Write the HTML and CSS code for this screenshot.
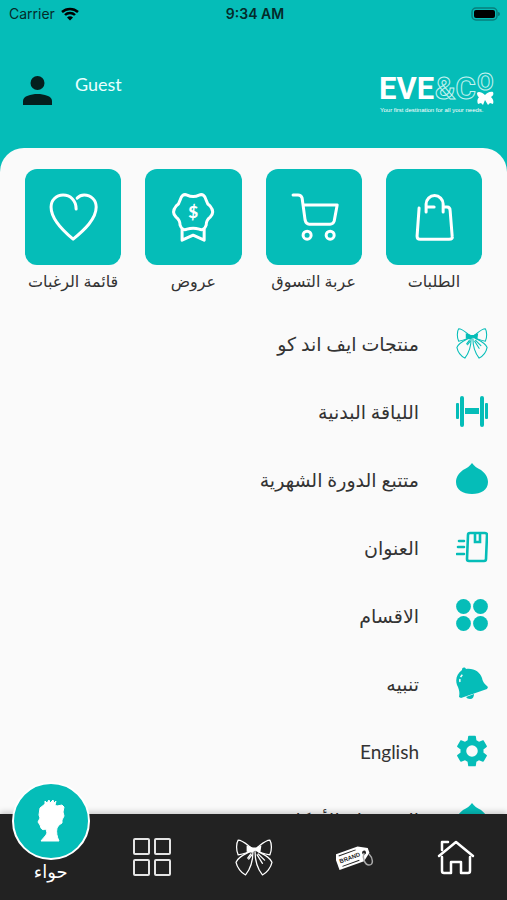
FILE: index.html
```html
<!DOCTYPE html>
<html lang="ar" dir="rtl">
<head>
    <meta charset="UTF-8">
    <meta name="viewport" content="width=device-width, initial-scale=1.0">
    <title>EVE&amp;CO</title>
    <link rel="stylesheet" href="styles.css">
</head>
<body>

<!-- shared shapes -->
<svg class="symbols" width="0" height="0" aria-hidden="true">
    <symbol id="bow" viewBox="0 0 36 36">
        <g fill="none" stroke="currentColor" stroke-width="1.2" stroke-linejoin="round" stroke-linecap="round">
            <path d="M15 9C11 6 7 2 3 2C1 5 1 12 3 16C8 15 12 14 15 12M21 9C25 6 29 2 33 2C35 5 35 12 33 16C28 15 24 14 21 12"/>
            <path d="M14 13C8 16 3 18 1 23C2 28 6 33 10 35C14 30 17 23 17 13M22 13C28 16 33 18 35 23C34 28 30 33 26 35C22 30 19 23 19 13"/>
            <path d="M15 15L12 19M13 20L16 16M21 16L26 24M22 15L28 21"/>
        </g>
        <path d="M11 7L17 9H20L25 7L24 14L19 12L16 14L11 13Z" fill="currentColor"/>
    </symbol>
    <symbol id="drop" viewBox="0 0 32 32">
        <path d="M16 0C18 3 21 5 25 7C29 10 32 14 32 19C32 27 25 31 16 31S0 27 0 19C0 14 3 10 7 7C11 5 14 3 16 0Z" fill="currentColor"/>
    </symbol>
</svg>

<div class="status-bar" dir="ltr">
    <div class="carrier">
        <span>Carrier</span>
        <svg width="18" height="14" viewBox="0 0 18 14">
            <path d="M1 5A12 12 0 0 1 17 5M4 8A7 7 0 0 1 14 8" fill="none" stroke="currentColor" stroke-width="2.5"/>
            <path d="M9 13.5L6 10.6A4 4 0 0 1 12 10.6Z" fill="currentColor"/>
        </svg>
    </div>
    <time class="clock">9:34 AM</time>
    <svg class="battery" width="30" height="14" viewBox="0 0 30 14">
        <rect x="1" y="1" width="25" height="12" rx="4" fill="none" stroke="#087f7c" stroke-width="1.5"/>
        <rect x="3" y="3" width="21" height="8" rx="2" fill="#000"/>
        <path d="M27 5Q29 5 29 7T27 9Z" fill="#087f7c"/>
    </svg>
</div>

<header class="header" dir="ltr">
    <a class="user" href="#">
        <svg width="29" height="29" viewBox="0 0 29 29">
            <circle cx="14.5" cy="7" r="7" fill="#041f1e"/>
            <path d="M0 29V25C0 20 8 18 14.5 18S29 20 29 25V29Z" fill="#041f1e"/>
        </svg>
        <span>Guest</span>
    </a>
    <svg class="logo" width="116" height="44" viewBox="0 0 116 44" role="img" aria-label="EVE&amp;CO">
        <text class="logo-solid" x="0" y="30">EVE</text>
        <text class="logo-outline" x="56" y="30">&amp;C</text>
        <text class="logo-small" x="98" y="21">O</text>
        <path d="M106 26C103 23 99 22 98 24C98 26 99 28 100 28C98 30 98 33 99 35L102 34L104 36L106 31L109 36L111 34L114 35C115 32 114 30 112 28C114 27 115 25 114 23C111 22 108 24 106 26Z" fill="#fff"/>
        <text class="logo-tagline" x="1" y="43">Your first destination for all your needs.</text>
    </svg>
</header>

<main class="panel">
    <nav class="tiles">
        <a class="tile" href="#">
            <span class="tile-box">
                <svg viewBox="0 0 96 96">
                    <path d="M33 39L31 67Q31 70 34 70H63Q67 70 66 67L64 42Q64 38 61 38H57M40 43V35A8.500 8.500 0 0 1 57 35V43M41 38H48"/>
                </svg>
            </span>
            <span>الطلبات</span>
        </a>
        <a class="tile" href="#">
            <span class="tile-box">
                <svg viewBox="0 0 96 96">
                    <path d="M27 26H32Q35 26 36 29L39 51Q40 55 43 55H64Q67 55 68 52L71 36H38"/>
                    <circle cx="41" cy="66" r="4"/>
                    <circle cx="64" cy="66" r="4"/>
                </svg>
            </span>
            <span>عربة التسوق</span>
        </a>
        <a class="tile" href="#">
            <span class="tile-box">
                <svg viewBox="0 0 96 96">
                    <path d="M42 26Q48 29 54 26Q59 24 61 31Q62 35 65 37Q70 43 65 48Q61 51 61 56Q59 62 54 60Q48 58 42 60Q37 62 35 56Q35 51 31 48Q26 43 31 37Q34 35 35 31Q37 24 42 26Z"/>
                    <path d="M37 60V71L48 66L59 71V60"/>
                    <text class="tile-dollar" x="48" y="49">$</text>
                </svg>
            </span>
            <span>عروض</span>
        </a>
        <a class="tile" href="#">
            <span class="tile-box">
                <svg viewBox="0 0 96 96">
                    <path d="M51 40C51 31 45 26 38 26C31 26 26 31 26 38C26 50 37 61 48 70C59 61 71 50 71 38C71 31 66 26 59 26Q55 26 52 29"/>
                </svg>
            </span>
            <span>قائمة الرغبات</span>
        </a>
    </nav>

    <ul class="menu">
        <li><a href="#">
            <svg viewBox="0 0 36 36"><use href="#bow"/></svg>
            <span>منتجات ايف اند كو</span>
        </a></li>
        <li><a href="#">
            <svg viewBox="0 0 32 32" fill="currentColor">
                <rect x="0" y="8" width="3" height="16" rx="1"/>
                <rect x="4" y="1" width="4" height="31" rx="2"/>
                <rect x="9" y="13" width="14" height="6"/>
                <rect x="24" y="1" width="4" height="31" rx="2"/>
                <rect x="29" y="8" width="3" height="16" rx="1"/>
            </svg>
            <span>اللياقة البدنية</span>
        </a></li>
        <li><a href="#">
            <svg viewBox="0 0 32 32"><use href="#drop"/></svg>
            <span>متتبع الدورة الشهرية</span>
        </a></li>
        <li><a href="#">
            <svg viewBox="0 0 32 32" fill="none" stroke="currentColor" stroke-width="2.600">
                <path d="M14 2H29Q31 2 31 4L30 28Q30 30 28 30H13Q11 30 11 28L12 4Q12 2 14 2ZM19 2V11H24V2"/>
                <path d="M3 10H8M2 16H8M1 23H8" stroke-linecap="round"/>
            </svg>
            <span>العنوان</span>
        </a></li>
        <li><a href="#">
            <svg viewBox="0 0 32 32" fill="currentColor">
                <circle cx="7.500" cy="7.500" r="7.400"/>
                <circle cx="24.500" cy="7.500" r="7.400"/>
                <circle cx="7.500" cy="24.500" r="7.400"/>
                <circle cx="24.500" cy="24.500" r="7.400"/>
            </svg>
            <span>الاقسام</span>
        </a></li>
        <li><a href="#">
            <svg viewBox="0 0 32 32" fill="currentColor">
                <path d="M6 3C6 0 9 0 10 2C18 1 24 5 26 11C27 16 29 17 32 20L31 22L5 31L3 30C4 25 3 22 1 18C-1 12 1 7 6 3Z"/>
                <path d="M10 30L18 27Q18 32 14 32Q11 32 10 30Z"/>
                <path d="M4 15Q3 11 7 7" fill="none" stroke="#fafafa" stroke-width="1.500" stroke-dasharray="3 2"/>
            </svg>
            <span>تنبيه</span>
        </a></li>
        <li><a href="#">
            <svg viewBox="2 2 20 20" fill="currentColor">
                <path d="M19.140 12.940c.04-.3.060-.61.060-.94s-.02-.64-.07-.94l2.030-1.580c.18-.14.230-.41.120-.61l-1.920-3.320c-.12-.22-.37-.29-.59-.22l-2.390.96c-.5-.38-1.030-.7-1.620-.94l-.36-2.540c-.04-.24-.24-.41-.48-.41h-3.840c-.24 0-.43.170-.47.410l-.36 2.540c-.59.240-1.130.570-1.620.940l-2.390-.96c-.22-.08-.47 0-.59.220L2.740 8.870c-.12.210-.08.470.120.610l2.030 1.580c-.05.300-.09.630-.09.940s.02.640.070.940l-2.030 1.580c-.18.140-.23.410-.12.610l1.920 3.320c.12.220.370.290.590.220l2.390-.96c.5.380 1.030.700 1.620.940l.36 2.540c.05.240.240.410.480.410h3.840c.24 0 .440-.17.470-.41l.36-2.540c.59-.24 1.130-.56 1.620-.94l2.390.960c.22.080.470 0 .59-.22l1.920-3.320c.12-.22.070-.47-.12-.61l-2.010-1.580zM12 15.600a3.600 3.600 0 1 1 0-7.200a3.600 3.600 0 0 1 0 7.200z"/>
            </svg>
            <span>English</span>
        </a></li>
        <li><a href="#">
            <svg viewBox="0 0 32 32"><use href="#drop"/></svg>
            <span>الشروط والأحكام</span>
        </a></li>
    </ul>
</main>

<nav class="tab-bar">
    <a href="#" aria-label="الرئيسية">
        <svg viewBox="0 0 38 38" fill="none" stroke="currentColor" stroke-width="2.500" stroke-linejoin="round" stroke-linecap="round">
            <path d="M2 18L19 4L36 18M5 12V4H11M5 19V33Q5 35 7 35H14V24H24V35H31Q33 35 33 33V19"/>
        </svg>
    </a>
    <a href="#" aria-label="الماركات">
        <svg viewBox="0 0 38 38">
            <g transform="rotate(-20 19 19)">
                <path d="M0 10H25L34 15V20L26 26H0Z" fill="#fff"/>
                <path d="M4 12.500H22M4 23.500H22" stroke="#222"/>
                <text class="tag-text" x="3" y="20">BRAND</text>
                <circle cx="29" cy="18" r="2" fill="#222"/>
            </g>
            <path d="M28 15C26 20 29 27 33 27C38 27 37 20 33 16" fill="none" stroke="#aaa" stroke-width="1.500"/>
        </svg>
    </a>
    <a href="#" aria-label="ايف اند كو">
        <svg viewBox="0 0 36 36"><use href="#bow"/></svg>
    </a>
    <a href="#" aria-label="الاقسام">
        <svg viewBox="0 0 38 38" fill="none" stroke="#e4e4e4" stroke-width="2">
            <rect x="1" y="1" width="15" height="15" rx="1"/>
            <rect x="22" y="1" width="15" height="15" rx="1"/>
            <rect x="1" y="22" width="15" height="15" rx="1"/>
            <rect x="22" y="22" width="15" height="15" rx="1"/>
        </svg>
    </a>
    <a class="active" href="#">
        <span class="bubble">
            <svg viewBox="0 0 28 42" fill="currentColor">
                <path d="M8 4L8 1L10 3L12 0L13 3L16 0L17 3L19 1L18 5L20 6L25 5L27 7L26 12L27 16L25 20L25 23L22 25L20 28C19 32 20 37 22 41H4C6 38 9 36 10 33L9 29C7 30 5 30 4 28L3 25L1 22L3 18L2 15L3 8Z" stroke="currentColor" stroke-linejoin="round"/>
            </svg>
        </span>
        <span>حواء</span>
    </a>
</nav>

</body>
</html>
```
FILE: styles.css
```css
* {
    box-sizing: border-box;
}

body {
    margin: 0;
    height: 100vh;
    display: flex;
    flex-direction: column;
    overflow: hidden;
    background-color: #05bdb8;
    color: #333;
    font-family: Lato, "DejaVu Sans", sans-serif;
}

a {
    color: inherit;
    text-decoration: none;
}

.symbols {
    position: absolute;
}

/* status bar */
.status-bar {
    display: grid;
    grid-template-columns: 1fr auto 1fr;
    align-items: center;
    height: 27px;
    padding: 0 6px 0 9px;
    flex-shrink: 0;
    font-family: Inter, sans-serif;
    font-size: 14px;
    color: #042b2a;
}

.carrier {
    display: flex;
    align-items: center;
    gap: 6px;
}

.carrier svg {
    color: #000;
}

.clock {
    font-weight: 600;
}

.battery {
    justify-self: end;
}

/* header */
.header {
    display: flex;
    justify-content: space-between;
    align-items: flex-start;
    height: 121px;
    padding: 42px 12px 0 23px;
    flex-shrink: 0;
}

.user {
    display: flex;
    gap: 23px;
    padding-top: 7px;
    color: #e9ffff;
    font-size: 18px;
    line-height: 16px;
}

.logo {
    overflow: visible;
}

.logo text {
    direction: ltr;
    font-family: Roboto, sans-serif;
    font-weight: bold;
    font-size: 31px;
    fill: #fff;
}

.logo .logo-outline,
.logo .logo-small {
    fill: none;
    stroke: #c4f2f0;
    stroke-width: 1px;
}

.logo .logo-small {
    font-size: 24px;
}

.logo .logo-tagline {
    font-family: "Liberation Sans", sans-serif;
    font-weight: normal;
    font-size: 6px;
}

/* content panel */
.panel {
    flex: 1;
    min-height: 0;
    overflow: hidden;
    padding-top: 21px;
    background-color: #fafafa;
    border-radius: 24px 24px 0 0;
}

.tiles {
    display: grid;
    grid-template-columns: repeat(4, 1fr);
    gap: 24px;
    padding: 0 25px;
}

.tile {
    display: flex;
    flex-direction: column;
    align-items: center;
    gap: 4px;
    font-size: 16px;
    line-height: 24px;
    white-space: nowrap;
}

.tile-box {
    width: 100%;
    aspect-ratio: 1;
    border-radius: 12px;
    background-color: #05bdb8;
}

.tile-box svg {
    display: block;
    width: 100%;
    fill: none;
    stroke: #fff;
    stroke-width: 3;
    stroke-linecap: round;
    stroke-linejoin: round;
}

.tile-dollar {
    font-family: Lato, sans-serif;
    font-size: 17px;
    font-weight: 900;
    text-anchor: middle;
    fill: #fff;
    stroke: none;
}

.menu {
    list-style: none;
    margin: 0;
    padding: 16px 0 0;
}

.menu a {
    display: flex;
    align-items: center;
    gap: 37px;
    height: 68px;
    padding: 0 19px;
    font-size: 19px;
}

.menu svg {
    width: 32px;
    height: 32px;
    color: #05bdb8;
}

/* bottom tabs */
.tab-bar {
    display: grid;
    grid-template-columns: repeat(5, 1fr);
    grid-template-rows: 100%;
    height: 86px;
    flex-shrink: 0;
    background-color: #222;
    color: #fff;
    box-shadow: 0 -2px 6px rgba(0, 0, 0, 0.2);
    z-index: 1;
}

.tab-bar a {
    display: flex;
    flex-direction: column;
    align-items: center;
    justify-content: center;
}

.tab-bar svg {
    width: 38px;
    height: 38px;
}

.tag-text {
    direction: ltr;
    font-family: "Liberation Sans", sans-serif;
    font-size: 6px;
    font-weight: bold;
    fill: #222;
}

.tab-bar .active {
    justify-content: flex-end;
    padding-bottom: 18px;
    font-size: 18px;
    line-height: 22px;
}

.bubble {
    display: flex;
    align-items: center;
    justify-content: center;
    flex-shrink: 0;
    width: 78px;
    height: 78px;
    border: 2px solid #fff;
    border-radius: 50%;
    background-color: #05bdb8;
}

.tab-bar .bubble svg {
    width: 28px;
    height: 42px;
}
```
